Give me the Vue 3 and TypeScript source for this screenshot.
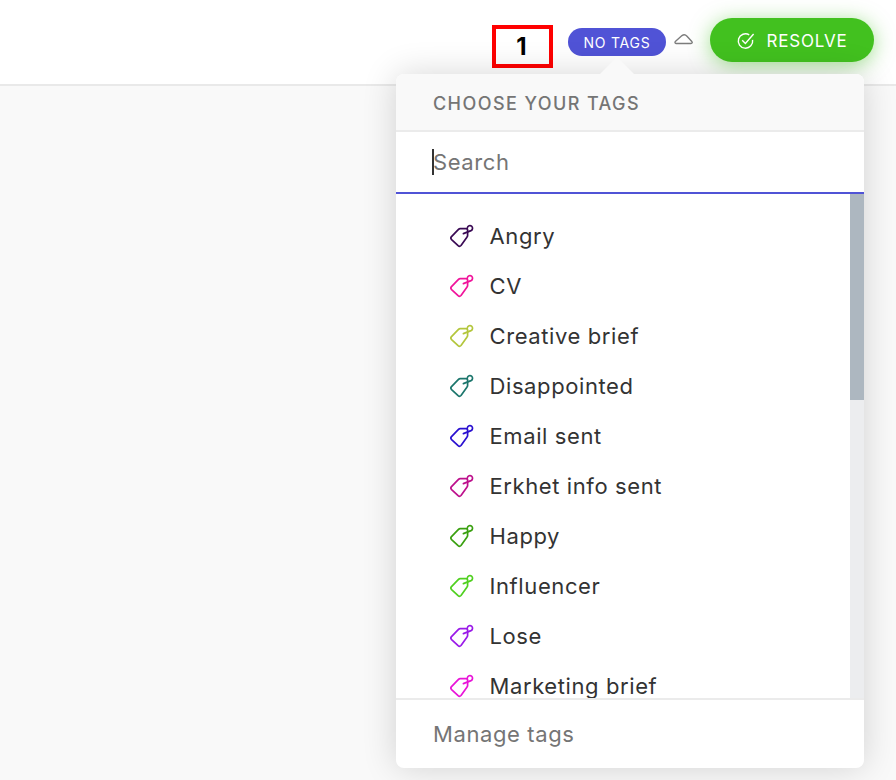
<script setup lang="ts">
interface Tag { name: string; color: string }
const tags: Tag[] = [
  { name: 'Angry', color: '#3a0a54' },
  { name: 'CV', color: '#f0149b' },
  { name: 'Creative brief', color: '#b3c63c' },
  { name: 'Disappointed', color: '#1c766c' },
  { name: 'Email sent', color: '#2a10d0' },
  { name: 'Erkhet info sent', color: '#bd108c' },
  { name: 'Happy', color: '#3aa010' },
  { name: 'Influencer', color: '#50d020' },
  { name: 'Lose', color: '#9a1ae8' },
  { name: 'Marketing brief', color: '#e814d8' },
]
</script>

<template>
  <div class="page">
    <header class="bar">
      <div class="num">1</div>
      <div class="badge">NO TAGS</div>
      <svg class="cloud" width="20" height="12" viewBox="0 0 20 12">
        <path d="M2 10.5h15c1.2 0 1.6-1.2.8-2L13 3.2C11.6 1.6 9.6 1.3 8 2.6L1.6 8.3c-1 .9-.7 2.2.4 2.2z" />
      </svg>
      <button class="resolve">
        <svg width="20" height="20" viewBox="0 0 20 20">
          <path d="M16.6 8.8a7.2 7.2 0 1 1-3.4-5" />
          <path d="M6.2 9.2l3.2 3.2 8.2-9.4" />
        </svg>
        <span>RESOLVE</span>
      </button>
    </header>
    <section class="pop">
      <div class="arrow"></div>
      <div class="head">CHOOSE YOUR TAGS</div>
      <div class="search">
        <span class="caret"></span>
        <input placeholder="Search" />
      </div>
      <div class="list">
        <ul>
          <li v-for="t in tags" :key="t.name">
            <svg class="tag" :style="{ color: t.color }" width="24" height="24" viewBox="0 0 24 24">
              <path d="M1.5 12.6 8.5 5.4c.5-.5 1-.7 1.7-.7h6.3c.7 0 1.1.4 1.1 1.1v5.7c0 .7-.2 1.2-.7 1.7L11 21.5c-.9 1-2 1-2.9.2l-6.5-6.1c-.9-.9-.9-2.1-.1-3z" />
              <path d="M13.4 9.6l7.6-3a2.6 2.6 0 1 0-3.6-2.9l-.4 1" />
            </svg>
            <span>{{ t.name }}</span>
          </li>
        </ul>
        <div class="track"><div class="thumb"></div></div>
      </div>
      <div class="foot">Manage tags</div>
    </section>
  </div>
</template>

<style scoped>
.page {
  position: relative;
  height: 780px;
  overflow: hidden;
  background: #f9f9f9;
  font-family: Inter, "Liberation Sans", sans-serif;
}
.bar {
  height: 84px;
  box-sizing: content-box;
  background: #fff;
  border-bottom: 2px solid #e9e9e9;
  display: flex;
  align-items: center;
  padding-right: 22px;
  justify-content: flex-end;
}
.num {
  box-sizing: border-box;
  width: 61px;
  height: 43px;
  margin-top: 9px;
  padding-right: 2px;
  border: 4px solid #f00;
  background: #fff;
  color: #000;
  font: 700 24px/35px Inter, sans-serif;
  text-align: center;
}
.badge {
  margin-left: 15px;
  width: 98px;
  height: 28px;
  border-radius: 14px;
  background: #5053d6;
  color: #fff;
  font-size: 14px;
  line-height: 30px;
  letter-spacing: 0.8px;
  text-align: center;
  margin-top: -1px;
}
.cloud {
  margin-left: 8px;
  margin-right: 16px;
  margin-top: -6px;
  fill: none;
  stroke: #7d7d7d;
  stroke-width: 1.4;
}
.resolve {
  width: 164px;
  height: 44px;
  margin-top: -4px;
  padding: 2px 0 0;
  border: 0;
  border-radius: 22px;
  background: #42c11f;
  box-shadow: 0 3px 20px rgba(66, 193, 31, 0.5);
  color: #fff;
  font: 400 17px Inter, sans-serif;
  letter-spacing: 0.8px;
  display: flex;
  align-items: center;
  justify-content: center;
  gap: 10px;
}
.resolve svg {
  fill: none;
  stroke: #fff;
  stroke-width: 1.4;
}
.pop {
  position: absolute;
  left: 396px;
  top: 74px;
  width: 468px;
  height: 694px;
  display: flex;
  flex-direction: column;
  background: #fff;
  border-radius: 8px;
  box-shadow: 0 0 34px rgba(0, 0, 0, 0.16);
}
.arrow {
  position: absolute;
  left: 203px;
  top: -17px;
  width: 0;
  height: 0;
  border-left: 18px solid transparent;
  border-right: 18px solid transparent;
  border-bottom: 18px solid #f9f9f9;
}
.head {
  height: 56px;
  flex: none;
  padding-left: 37px;
  background: #f9f9f9;
  border-radius: 8px 8px 0 0;
  border-bottom: 2px solid #ebebeb;
  color: #757575;
  font-size: 18px;
  font-weight: 500;
  letter-spacing: 1.42px;
  line-height: 60px;
}
.search {
  position: relative;
  flex: none;
  height: 60px;
  border-bottom: 2px solid #5053d6;
}
.search input {
  width: 100%;
  height: 100%;
  box-sizing: border-box;
  padding: 0 0 0 37px;
  border: 0;
  outline: 0;
  background: transparent;
  font: 400 22px Inter, sans-serif;
  letter-spacing: 0.6px;
  color: #333;
}
.search input::placeholder {
  color: #757575;
  opacity: 1;
}
.caret {
  position: absolute;
  left: 36px;
  top: 17px;
  width: 2px;
  height: 26px;
  background: #333;
}
.list {
  position: relative;
  flex: 1;
  min-height: 0;
  overflow: hidden;
}
ul {
  list-style: none;
  margin: 0;
  padding: 17px 0 0 54px;
}
li {
  height: 50px;
  display: flex;
  align-items: center;
  gap: 15.5px;
  color: #333;
  font-size: 22px;
  letter-spacing: 0.6px;
}
.tag {
  flex: none;
  fill: none;
  stroke: currentColor;
  stroke-width: 1.7;
  stroke-linejoin: round;
  stroke-linecap: round;
}
.track {
  position: absolute;
  right: 0;
  top: 0;
  bottom: 0;
  width: 14px;
  background: #ecedef;
}
.thumb {
  height: 206px;
  background: #adb7c0;
}
.foot {
  flex: none;
  height: 68px;
  padding-left: 37px;
  border-top: 2px solid #ebebeb;
  color: #757575;
  font-size: 22px;
  letter-spacing: 0.6px;
  line-height: 68px;
}
</style>
